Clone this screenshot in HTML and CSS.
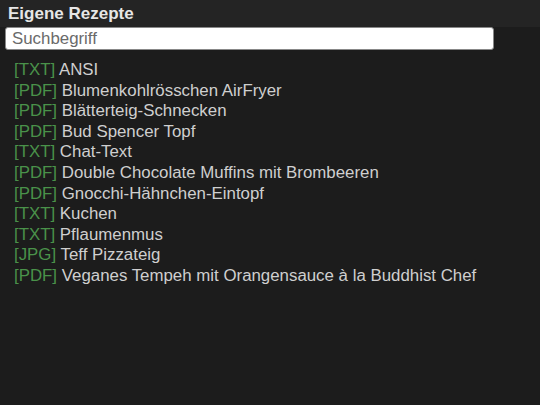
FILE: index.html
```html
<!DOCTYPE html>
<html lang="de">
<head>
<meta charset="utf-8">
<title>Eigene Rezepte</title>
<link rel="stylesheet" href="styles.css">
</head>
<body>
<header class="top">
  <h1 class="title">Eigene Rezepte</h1>
</header>
<div class="search">
  <input class="search-input" type="text" placeholder="Suchbegriff">
</div>
<ul class="list">
  <li><span class="tag">[TXT]</span> ANSI</li>
  <li><span class="tag">[PDF]</span> Blumenkohlrösschen AirFryer</li>
  <li><span class="tag">[PDF]</span> Blätterteig-Schnecken</li>
  <li><span class="tag">[PDF]</span> Bud Spencer Topf</li>
  <li><span class="tag">[TXT]</span> Chat-Text</li>
  <li><span class="tag">[PDF]</span> Double Chocolate Muffins mit Brombeeren</li>
  <li><span class="tag">[PDF]</span> Gnocchi-Hähnchen-Eintopf</li>
  <li><span class="tag">[TXT]</span> Kuchen</li>
  <li><span class="tag">[TXT]</span> Pflaumenmus</li>
  <li><span class="tag">[JPG]</span> Teff Pizzateig</li>
  <li><span class="tag">[PDF]</span> Veganes Tempeh mit Orangensauce à la Buddhist Chef</li>
</ul>
</body>
</html>
```

FILE: styles.css
```css
html, body {
  margin: 0;
  padding: 0;
  height: 100%;
  background: #1c1c1c;
  font-family: "Liberation Sans", Arial, sans-serif;
}
.top {
  background: #242424;
  height: 27px;
  padding: 0 8px;
  box-sizing: border-box;
}
.title {
  margin: 0;
  font-size: 17px;
  font-weight: bold;
  color: #e6e6e6;
  line-height: 27px;
}
.search {
  margin-top: 0;
  padding: 0 46px 0 5px;
}
.search-input {
  display: block;
  width: 100%;
  height: 23px;
  box-sizing: border-box;
  border: 1px solid #888;
  border-radius: 3px;
  background: #fff;
  padding: 0 6px;
  font-family: "Liberation Sans", Arial, sans-serif;
  font-size: 16.85px;
  color: #333;
  outline: none;
}
.search-input::placeholder {
  color: #6a6a6a;
}
.list {
  list-style: none;
  margin: 10px 0 0;
  padding: 0 0 0 14px;
}
.list li {
  font-size: 16.85px;
  line-height: 20.6px;
  color: #cfcfcf;
}
.tag {
  color: #4a924a;
}
```
